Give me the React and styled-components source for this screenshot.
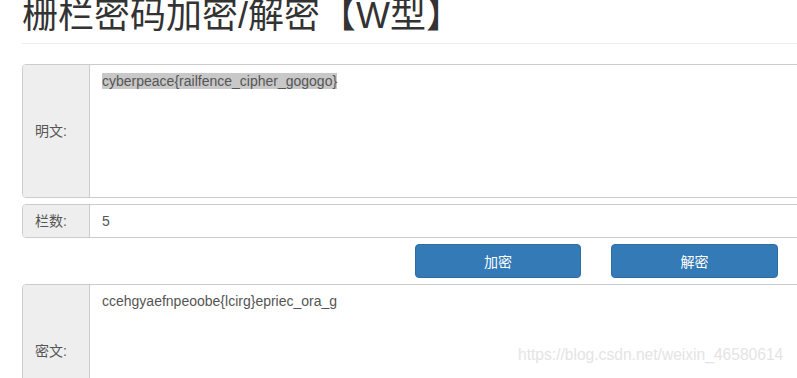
import React from "react";
import styled, { createGlobalStyle } from "styled-components";

const GlobalStyle = createGlobalStyle`
    body {
        margin: 0;
        overflow: hidden;
        background: #fff;
        color: #333;
        font-family: "Liberation Sans", Arial, "Noto Sans CJK SC", sans-serif;
        font-size: 14px;
        line-height: 20px;
    }
`;

const Page = styled.div`
    position: relative;
    width: 820px;
    padding-left: 22px;
`;

const Title = styled.h1`
    margin: -4px 0 20px;
    padding-bottom: 7px;
    border-bottom: 1px solid #eee;
    font-family: "Liberation Sans", "Noto Sans CJK SC", sans-serif;
    font-size: 36px;
    font-weight: 400;
    line-height: 40px;
    color: #333;
`;

const Form = styled.div`
    display: flex;
    flex-direction: column;
    gap: 6px;
`;

const Group = styled.div`
    display: flex;
    height: ${(props) => props.h}px;
    box-sizing: border-box;
    border: 1px solid #ccc;
    border-radius: 4px;
    overflow: hidden;
`;

const Addon = styled.div`
    flex: 0 0 67px;
    box-sizing: border-box;
    display: flex;
    align-items: center;
    padding-left: 12px;
    background: #eee;
    border-right: 1px solid #ccc;
    color: #555;
`;

const Field = styled.div`
    flex: 1;
    padding: 6px 12px;
    color: #555;
`;

const Selected = styled.span`
    background: #c8c8c8;
`;

const Buttons = styled.div`
    display: flex;
    justify-content: flex-end;
    gap: 30px;
    padding-right: 64px;
`;

const Button = styled.button`
    width: ${(props) => props.w}px;
    height: 34px;
    border: 1px solid #2e6da4;
    border-radius: 4px;
    background: #337ab7;
    color: #fff;
    font-family: "Liberation Sans", "Noto Sans CJK SC", sans-serif;
    font-size: 14px;
`;

const Watermark = styled.div`
    position: absolute;
    left: 518px;
    top: 349px;
    font-family: "Liberation Sans", Arial, sans-serif;
    font-size: 15.6px;
    color: #e4e4e4;
    white-space: nowrap;
`;

const App = () => (
    <Page>
        <GlobalStyle />
        <Title>栅栏密码加密/解密【W型】</Title>
        <Form>
            <Group h={134}>
                <Addon>明文:</Addon>
                <Field>
                    <Selected>cyberpeace{"{"}railfence_cipher_gogogo{"}"}</Selected>
                </Field>
            </Group>
            <Group h={34}>
                <Addon>栏数:</Addon>
                <Field>5</Field>
            </Group>
            <Buttons>
                <Button w={166}>加密</Button>
                <Button w={167}>解密</Button>
            </Buttons>
            <Group h={134}>
                <Addon>密文:</Addon>
                <Field>ccehgyaefnpeoobe{"{"}lcirg{"}"}epriec_ora_g</Field>
            </Group>
        </Form>
        <Watermark>https://blog.csdn.net/weixin_46580614</Watermark>
    </Page>
);

export default App;
